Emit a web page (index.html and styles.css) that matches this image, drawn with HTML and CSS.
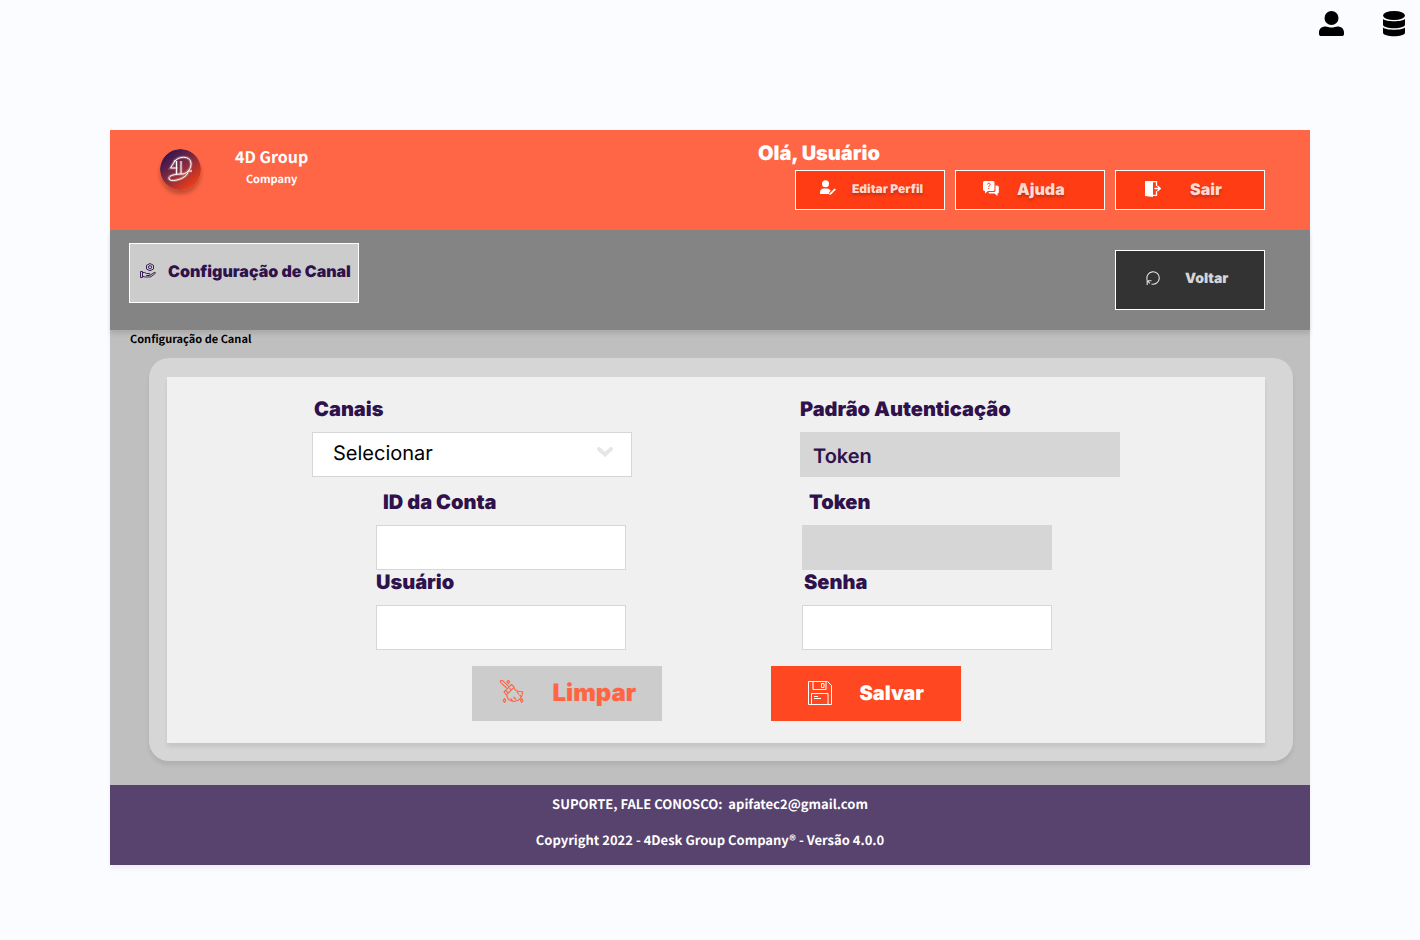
FILE: index.html
```html
<!DOCTYPE html>
<html lang="pt-BR">
<head>
<meta charset="utf-8">
<meta name="viewport" content="width=device-width, initial-scale=1">
<title>Configuração de Canal</title>
<link rel="stylesheet" href="styles.css">
</head>
<body>
<nav class="topbar">
  <a href="#" aria-label="Conta"><svg width="26" height="26" viewBox="0 0 26 26"><circle cx="12.500" cy="7" r="7"/><path d="M0 21.500C0 17.500 3 15.500 6.500 15.500c2 .3 3.500 1 6 1s4-.7 6-1c3.500 0 6.500 2 6.500 6v1.500c0 1.500-1 2-2 2H2c-1 0-2-.5-2-2z"/></svg></a>
  <a href="#" aria-label="Dados"><svg width="22" height="26" viewBox="0 0 22 26"><ellipse cx="11" cy="4.500" rx="11" ry="4.500"/><path d="M0 8c3 3 19 3 22 0v5.500c0 5-22 5-22 0z"/><path d="M0 16.500c3 3 19 3 22 0v5c0 5-22 5-22 0z"/></svg></a>
</nav>

<div class="app">
  <header class="header">
    <div class="brand">
      <svg class="logo" viewBox="0 0 41 41" fill="none" aria-hidden="true">
        <defs><linearGradient id="disc" x1=".15" y1=".1" x2=".8" y2=".9"><stop offset="0" stop-color="#2d1454"/><stop offset=".5" stop-color="#852b3e"/><stop offset="1" stop-color="#ef3c16"/></linearGradient></defs>
        <circle cx="20.500" cy="20.500" r="20.500" fill="url(#disc)"/>
        <g class="logo-glow"><path d="M15.500 11 10.500 19h7M16.500 12v13M21 12v13"/><path d="M14 13c4-6 16-7 17 1 .5 5-3 10-8 11-7 0-15 1-14 5 2 3 11 1 15-2 3-2 4-4 4-6h4"/></g>
        <g stroke="#fff" stroke-width="1"><path d="M15.500 11 10.500 19h7M16.500 12v13M21 12v13"/><path d="M14 13c4-6 16-7 17 1 .5 5-3 10-8 11-7 0-15 1-14 5 2 3 11 1 15-2 3-2 4-4 4-6h4"/></g>
      </svg>
      <div class="brand-text"><span class="brand-name">4D Group</span><span class="brand-sub">Company</span></div>
    </div>
    <div class="user">
      <p class="greeting">Olá, Usuário</p>
      <div class="actions">
        <button class="action action-profile" type="button">
          <svg width="16" height="16" viewBox="0 0 16 16" fill="#fff"><circle cx="5.500" cy="3.700" r="3.500"/><path d="M0 14v-2c0-2 2-3.500 4-3.500h3c1.500 0 3 1 3.500 2L9 13v1z"/><path d="M9.500 13.500 14.500 8.500l1.500 1-5 5-1.800.5z"/></svg>
          <span>Editar Perfil</span>
        </button>
        <button class="action action-help" type="button">
          <svg width="16" height="16" viewBox="0 0 16 16" fill="#fff"><path d="M1.500 0h8.500q1.500 0 1.500 1.500v7q0 1.500-1.500 1.500H5l-3 2.500V10Q0 10 0 8.500v-7Q0 0 1.500 0z"/><path d="M12.500 4.500H14q1.800 0 1.800 1.500V11q0 1.500-1.300 1.500V15l-3-2.500H7q-1.500 0-1.500-1.500h5.500q1.500 0 1.500-1.500z"/><path d="M4.300 3.500c.3-1.800 3-1.500 2.800.2C7 4.800 5.800 4.500 5.700 6M5.700 7v1" fill="none" stroke="#ff3c14"/></svg>
          <span>Ajuda</span>
        </button>
        <button class="action action-exit" type="button">
          <svg width="16" height="16" viewBox="0 0 16 16" fill="#fff"><path d="M0 0h6l2 1v15l-8-1z"/><path d="M6 .7h5.500V5M8 14.300h3.500V10M9.500 7.500h5M12.500 5l2.700 2.500-2.700 2.500" fill="none" stroke="#fff" stroke-width="1.300"/></svg>
          <span>Sair</span>
        </button>
      </div>
    </div>
  </header>

  <div class="toolbar">
    <button class="tab" type="button">
      <svg width="16" height="16" viewBox="0 0 16 16" fill="none" stroke="#2f114c" stroke-width=".9"><path d="M.5 8.500h2v6h-2zM2.500 9.500h2.200l1.800 1h3q1 1.200-.5 2H6.500h3.200l4.500-3q1.300-.3 1.300.7l-4.500 3.500-1.500.3H5l-2.500-.7"/><path d="m10 .5 3.500 1.800v3.700l-3.500 1.800L6.500 6V2.300z"/><circle cx="10" cy="4.200" r="1.600"/></svg>
      <span>Configuração de Canal</span>
    </button>
    <button class="back" type="button">
      <svg width="15" height="15" viewBox="0 0 15 15" fill="none" stroke="#e2e2e2" stroke-width="1.100"><path d="M1.200 9A6.200 6.200 0 1 1 5.500 13M1.200 14V9.700h4.300M1.200 9.700l2.600 2.600"/></svg>
      <span>Voltar</span>
    </button>
  </div>

  <main class="content">
    <h1 class="crumb">Configuração de Canal</h1>
    <div class="card">
      <form class="form">
        <div class="fields">
          <div class="field first">
            <label for="canais">Canais</label>
            <div class="select-wrap">
              <select id="canais"><option>Selecionar</option></select>
              <svg class="chevron" viewBox="0 0 16 10" fill="none" stroke="#e6e6e6" stroke-width="4" stroke-linecap="round"><path d="m2 2 6 5.500L14 2"/></svg>
            </div>
          </div>
          <div class="field first">
            <label class="flush" for="padrao">Padrão Autenticação</label>
            <input class="readonly" id="padrao" type="text" value="Token" readonly>
          </div>
          <div class="field indent">
            <label class="inset" for="conta">ID da Conta</label>
            <input id="conta" type="text">
          </div>
          <div class="field short">
            <label class="inset" for="token">Token</label>
            <input class="readonly" id="token" type="text" readonly>
          </div>
          <div class="field indent">
            <label class="flush" for="usuario">Usuário</label>
            <input id="usuario" type="text">
          </div>
          <div class="field short">
            <label for="senha">Senha</label>
            <input id="senha" type="password">
          </div>
        </div>
        <div class="buttons">
          <button class="btn btn-clear" type="reset">
            <svg width="26" height="26" viewBox="0 0 26 26" fill="none" stroke="#ff6543" stroke-width="1.100" stroke-linejoin="round"><path d="M7.500 8 1.600 2.300Q.9 1.300 1.700.7t1.900 0L9.500 6.300M5 12 12.500 4.500l2.700 2.700-7.700 7.700zM14.800 7.800c1.500 3 4.500 4.200 8.700 4 .5 5.500-4 10-9.500 9.500-3.500-.5-6-3-6.300-6.800M7 11l2 1.500M10.500 8l1.500 2M18 12l2 2.500M20.500 15l1.500 1.500M14.500 17l2.500 2.500M11.500 18.500l2 2"/><path d="m9.300 0 1.300 1.900-1.300 1.900L8 1.900zM5.500 18.500l1.300 2-1.300 2-1.300-2zM22.700 18.500l1.300 2-1.300 2-1.300-2z"/></svg>
            <span>Limpar</span>
          </button>
          <button class="btn btn-save" type="submit">
            <svg width="24" height="24" viewBox="0 0 24 24" fill="none" stroke="#fff"><path d="M.5.500h19l4 4v19H.5z"/><path d="M5 .500v8h13v-8M13.500 2.500h2.500v4h-2.500zM3.500 23.500v-11h16.500v11M6 15.500h4M6 17.500h7"/></svg>
            <span>Salvar</span>
          </button>
        </div>
      </form>
    </div>
  </main>

  <footer class="footer">
    <p>SUPORTE, FALE CONOSCO:&nbsp; apifatec2@gmail.com</p>
    <p>Copyright 2022 - 4Desk Group Company® - Versão 4.0.0</p>
  </footer>
</div>
</body>
</html>
```
FILE: styles.css
```css
* { box-sizing: border-box; }
body {
  margin: 0;
  background: #fafcff;
  font-family: Inter, "Liberation Sans", sans-serif;
  color: #2f114c;
  text-rendering: geometricPrecision;
}
p, h1 { margin: 0; }
button, input, select { font-family: inherit; color: inherit; border-radius: 0; text-rendering: inherit; }
button { display: flex; align-items: center; cursor: pointer; white-space: nowrap; }
svg { flex: none; }

.topbar { display: flex; justify-content: flex-end; gap: 38px; height: 48px; padding: 11px 15px 0; }
.topbar a { color: #000; }

.app { margin: 82px 110px 60px; background: #bfbfbf; box-shadow: 0 4px 4px rgba(0, 0, 0, .05); }

.header { display: flex; justify-content: space-between; min-height: 100px; padding: 0 45px 20px 50px; background: #ff6646; }
.brand { display: flex; gap: 34px; align-items: flex-start; }
.logo { width: 41px; height: 41px; margin-top: 19px; border-radius: 50%; box-shadow: 0 4px 4px rgba(0, 0, 0, .25); }
.logo-glow { stroke: rgba(255, 255, 255, .25); stroke-width: 3; }
.brand-text { display: flex; flex-direction: column; align-items: center; padding-top: 14px; color: #fff; font-family: "Noto Sans CJK JP", "Noto Sans", sans-serif; font-weight: 700; }
.brand-name { font-size: 16px; line-height: 24px; }
.brand-sub { font-size: 11px; line-height: 22px; }
.user { padding-top: 8px; }
.greeting { padding-bottom: 2px; color: #fff; font-size: 20px; line-height: 30px; font-weight: 900; }
.actions { display: flex; gap: 10px; margin-left: 37px; }
.action { width: 150px; height: 40px; padding: 0 0 2px; border: 1px solid #fff; background: #ff3c14; color: #ffd8d0; font-size: 16px; font-weight: 900; text-shadow: 0 2px 3px rgba(0, 0, 0, .25); }
.action-profile { gap: 16px; padding-left: 24px; padding-bottom: 4px; font-size: 12px; }
.action-help { gap: 18px; padding-left: 27px; }
.action-exit { gap: 29px; padding-left: 29px; }

.toolbar { display: flex; justify-content: space-between; min-height: 100px; padding: 13px 45px 20px 19px; background: #848484; box-shadow: 0 4px 4px rgba(0, 0, 0, .1); }
.tab, .back { height: 60px; border: 1px solid #fff; }
.tab { gap: 12px; width: 230px; padding: 0 0 4px 10px; background: #ccc; color: #2f114c; font-size: 16px; font-weight: 900; }
.back { gap: 24px; width: 150px; margin-top: 7px; padding: 0 0 4px 30px; background: #333; color: #d6d6d6; font-size: 14px; font-weight: 900; }

.content { padding: 0 17px 24px 20px; }
.crumb { color: #000; font-family: "Noto Sans CJK JP", "Noto Sans", sans-serif; font-size: 11px; line-height: 18px; font-weight: 700; }
.card { margin: 10px 0 0 19px; padding: 19px 28px 18px 18px; border-radius: 20px; background: #d6d6d6; box-shadow: 0 4px 4px rgba(0, 0, 0, .08); }
.form { padding: 20px 16px 22px; background: #f0f0f0; box-shadow: 0 4px 4px rgba(0, 0, 0, .08); }
.fields { display: grid; grid-template-columns: 320px 320px; column-gap: 168px; justify-content: center; }
.field { display: flex; flex-direction: column; gap: 11px; }
.field label { padding-left: 2px; font-size: 20px; line-height: 24px; font-weight: 900; }
.field .inset { padding-left: 7px; }
.field .flush { padding-left: 0; }
.first { margin-bottom: 13px; }
.indent { padding-left: 64px; padding-right: 6px; }
.short { padding-left: 2px; padding-right: 68px; }
.field input, .field select { width: 100%; height: 45px; border: 1px solid #d6d6d6; background: #fff; font-size: 20px; padding: 0 12px; }
.field .readonly { background: #d6d6d6; font-weight: 600; padding-top: 3px; }
.select-wrap { position: relative; }
.field select { appearance: none; padding: 0 40px 3px 20px; color: #000; }
.chevron { position: absolute; top: 15px; right: 19px; width: 16px; height: 10px; pointer-events: none; }

.buttons { display: flex; justify-content: center; gap: 109px; margin-top: 16px; }
.btn { width: 190px; height: 55px; border: 0; padding: 0 0 2px; font-weight: 900; }
.btn-clear { gap: 28px; padding-left: 27px; background: #ccc; color: #ff6543; font-size: 24px; }
.btn-save { gap: 28px; padding-left: 37px; background: #ff4822; color: #fff; font-size: 20px; }

.footer { display: flex; flex-direction: column; gap: 12px; align-items: center; min-height: 80px; padding: 7px 16px 13px; background: #58426e; color: #fff; font-family: "Noto Sans CJK JP", "Noto Sans", sans-serif; font-size: 13px; line-height: 24px; font-weight: 700; }
```
